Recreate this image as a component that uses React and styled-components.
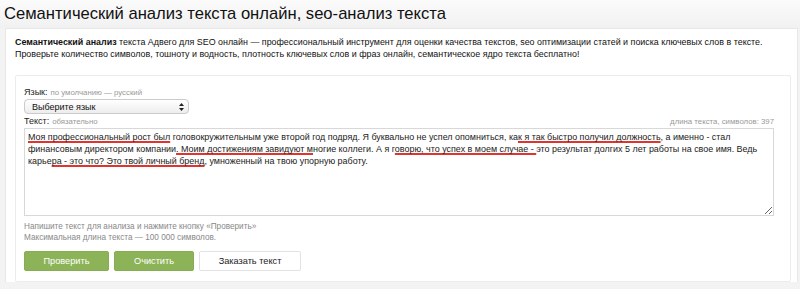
import styled, { createGlobalStyle } from "styled-components";

const Global = createGlobalStyle`
  html, body {
    margin: 0;
    padding: 0;
    background: #f3f3f3;
    font-family: "Liberation Sans", Arial, sans-serif;
    color: #222;
  }
`;

const Page = styled.div`
  width: 800px;
  height: 289px;
  overflow: hidden;
`;

const TitleBar = styled.div`
  height: 28px;
  padding: 0 4px;
  display: flex;
  align-items: center;
  background: linear-gradient(#fbfbfb, #f1f1f1);
`;

const Title = styled.h1`
  margin: 0;
  font-size: 16.6px;
  font-weight: normal;
  color: #111;
`;

const Card = styled.div`
  margin: 0 2px 0 5px;
  padding: 7px 6px 0 9px;
  background: #fff;
  border: 1px solid #e8e8e8;
  border-bottom: none;
`;

const Intro = styled.p`
  margin: 0 0 15px 0;
  font-size: 8.92px;
  line-height: 12px;
  color: #111;

  b {
    font-weight: bold;
  }
`;

const Form = styled.div`
  border: 1px solid #ececec;
  border-radius: 2px;
  padding: 11px 16px 10px 8px;
`;

const Label = styled.div`
  display: flex;
  align-items: baseline;
  gap: 3px;
  font-size: 9px;
  line-height: 11px;
  color: #222;
`;

const Hint = styled.span`
  font-size: 7.8px;
  color: #999;
`;

const Counter = styled.span`
  margin-left: auto;
  font-size: 7.8px;
  color: #999;
`;

const Select = styled.div`
  width: 165px;
  height: 15px;
  margin: 1px 0 2px;
  padding: 0 4px 0 7px;
  box-sizing: border-box;
  display: flex;
  align-items: center;
  justify-content: space-between;
  border: 1px solid #cbcbcb;
  border-radius: 4px;
  background: linear-gradient(#ffffff, #ededed);
  font-size: 9px;
  color: #111;
`;

const TextBox = styled.div`
  margin-top: 1px;
  height: 88px;
  box-sizing: border-box;
  padding: 2px 3px;
  border: 1px solid #d8d8d8;
  font-size: 8.95px;
  line-height: 12px;
  color: #1a1a1a;
  resize: vertical;
  overflow: auto;
`;

const Mark = styled.span`
  text-decoration: underline;
  text-decoration-color: #e2342e;
  text-decoration-thickness: 2px;
  text-underline-offset: 1px;
  text-decoration-skip-ink: none;
`;

const Note = styled.div`
  margin-top: 5px;
  font-size: 8.2px;
  line-height: 11px;
  color: #888;
`;

const Buttons = styled.div`
  display: flex;
  gap: 5px;
  margin-top: 8px;
`;

const Button = styled.button`
  width: ${(p) => p.$w}px;
  height: 20px;
  padding: 0;
  border: 1px solid ${(p) => (p.$light ? "#e2e2e2" : "#87ad52")};
  border-radius: 2px;
  background: ${(p) => (p.$light ? "#fff" : "#8cb357")};
  color: ${(p) => (p.$light ? "#222" : "#fff")};
  font-family: inherit;
  font-size: 9.2px;
  cursor: pointer;
`;

const Arrows = () => (
  <svg width="5" height="8" viewBox="0 0 5 8">
    <path d="M2.5 0 L5 3 H0 Z M2.5 8 L5 5 H0 Z" fill="#222" />
  </svg>
);

export default function App() {
  return (
    <Page>
      <Global />
      <TitleBar>
        <Title>Семантический анализ текста онлайн, seo-анализ текста</Title>
      </TitleBar>
      <Card>
        <Intro>
          <b>Семантический анализ</b> текста Адвего для SEO онлайн — профессиональный
          инструмент для оценки качества текстов, seo оптимизации статей и поиска
          ключевых слов в тексте.
          <br />
          Проверьте количество символов, тошноту и водность, плотность ключевых слов и
          фраз онлайн, семантическое ядро текста бесплатно!
        </Intro>
        <Form>
          <Label>
            Язык: <Hint>по умолчанию — русский</Hint>
          </Label>
          <Select>
            <span>Выберите язык</span>
            <Arrows />
          </Select>
          <Label>
            Текст: <Hint>обязательно</Hint>
            <Counter>длина текста, символов: 397</Counter>
          </Label>
          <TextBox>
            <Mark>Моя профессиональный рост был</Mark> головокружительным уже второй год
            подряд. Я буквально не успел опомниться, ка<Mark>к я так быстро получил должность</Mark>,
            а именно - стал финансовым директором компании<Mark>. Моим достижениям завидуют м</Mark>ногие
            коллеги. А я г<Mark>оворю, что успех в моем случае - </Mark>это результат долгих 5 лет
            работы на свое имя. Ведь карье<Mark>ра - это что? Это твой личный бренд</Mark>,
            умноженный на твою упорную работу.
          </TextBox>
          <Note>
            Напишите текст для анализа и нажмите кнопку «Проверить»
            <br />
            Максимальная длина текста — 100 000 символов.
          </Note>
          <Buttons>
            <Button $w={85}>Проверить</Button>
            <Button $w={80}>Очистить</Button>
            <Button $w={102} $light>
              Заказать текст
            </Button>
          </Buttons>
        </Form>
      </Card>
    </Page>
  );
}
